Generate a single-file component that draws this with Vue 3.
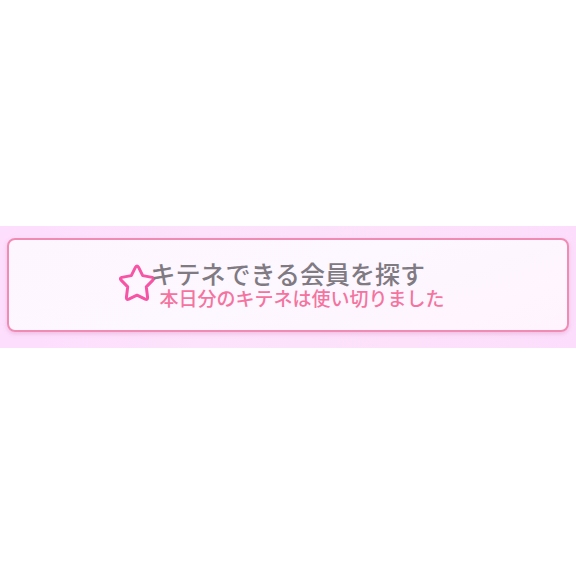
<script setup>
import { ref } from 'vue';

const title = ref('キテネできる会員を探す');
const notice = ref('本日分のキテネは使い切りました');
</script>

<template>
  <main class="page">
    <section class="band">
      <button type="button" class="kitene-btn">
        <svg class="star" viewBox="0 0 36 38" aria-hidden="true">
          <path
            d="M16.5 3.2 Q18 0.8 19.5 3.2 L23.7 11.6 L33.2 13.4 Q35.6 14.1 33.9 16.1 L27.3 22.9 L28.6 33.5 Q28.6 36.2 26.2 35.2 L18 31.2 L9.8 35.2 Q7.4 36.2 7.4 33.5 L8.7 22.9 L2.1 16.1 Q0.4 14.1 2.8 13.4 L12.3 11.6 Z"
          />
        </svg>
        <span class="labels">
          <span class="title">{{ title }}</span>
          <span class="notice">{{ notice }}</span>
        </span>
      </button>
    </section>
  </main>
</template>

<style>
body {
  margin: 0;
  background: #fff;
}
</style>

<style scoped>
.page {
  display: flex;
  flex-direction: column;
  justify-content: center;
  box-sizing: border-box;
  min-height: 100vh;
  padding-bottom: 2px;
  font-family: "Noto Sans CJK JP", sans-serif;
}

.band {
  padding: 12px 7px 16px;
  background: linear-gradient(90deg, #fddefd 0%, #fde3fc 35%, #fde1fb 70%, #fcdefc 100%);
}

/* === BUTTON === */
.kitene-btn {
  display: flex;
  align-items: center;
  justify-content: center;
  box-sizing: border-box;
  width: 100%;
  min-height: 94px;
  padding: 0 16px 4px 4px;
  border: 2px solid #f08cb4;
  border-radius: 8px;
  background: linear-gradient(160deg, #fef6ff 0%, #fdf7ff 50%, #fff4fe 100%);
  box-shadow: 0 2px 4px rgba(200, 100, 160, 0.25);
  font-family: inherit;
  cursor: pointer;
}

.star {
  flex: none;
  width: 36px;
  height: 38px;
  margin-right: -5px;
  fill: none;
  stroke: #f655a5;
  stroke-width: 3;
  stroke-linejoin: round;
}

/* === TEXT === */
.labels {
  display: flex;
  flex-direction: column;
  padding-top: 4px;
  text-align: left;
  white-space: nowrap;
}

.title {
  color: #807a82;
  font-size: 25px;
  font-weight: 500;
  line-height: 26px;
}

.notice {
  padding-left: 9px;
  color: #f4749f;
  font-size: 19px;
  font-weight: 500;
  line-height: 24px;
}
</style>
